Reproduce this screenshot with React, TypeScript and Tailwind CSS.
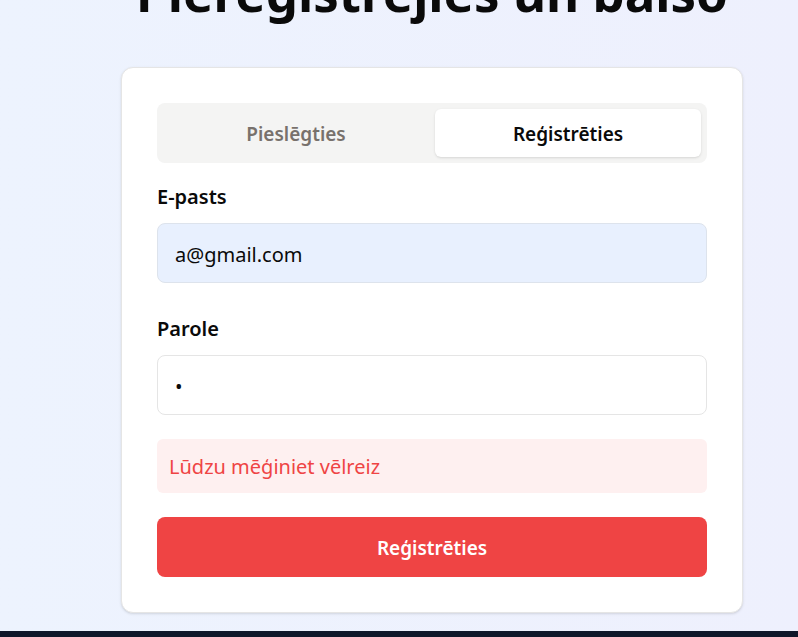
import React from "react";

export default function App() {
  return (
    <div
      className="flex h-[637px] w-full flex-col overflow-hidden bg-gradient-to-r from-[#edf3fe] to-[#eef0fd]"
      style={{ fontFamily: '"Noto Sans", "Open Sans", sans-serif' }}
    >
      <main className="flex flex-col pb-[18px]">
        <div className="ml-[121px] w-[622px]">
          <h1 className="mt-[-33px] mb-[49px] whitespace-nowrap text-center text-[51px] font-bold leading-[51px] text-[#0a0a0a]">
            Piereģistrējies un balso
          </h1>
          <div className="rounded-xl border border-[#e5e5e5] bg-white p-[35px] shadow-sm">
            <div className="flex h-[60px] gap-[6px] rounded-lg bg-[#f4f4f3] p-[6px]">
              <button className="flex-1 rounded-md pt-[2px] text-[19px] font-semibold text-[#78716c]">
                Pieslēgties
              </button>
              <button className="flex-1 rounded-md bg-white pt-[2px] text-[19px] font-semibold text-[#0a0a0a] shadow-sm">
                Reģistrēties
              </button>
            </div>

            <label className="mt-5 block text-[20px] font-semibold leading-[28px] text-[#0a0a0a]">
              E-pasts
            </label>
            <div className="mt-3 flex h-[60px] items-center rounded-lg border border-[#dde3ec] bg-[#e8f0fe] px-[17px] pt-[4px] text-[20px] text-[#0a0a0a]">
              a@gmail.com
            </div>

            <label className="mt-8 block text-[20px] font-semibold leading-[28px] text-[#0a0a0a]">
              Parole
            </label>
            <div className="mt-3 flex h-[60px] items-center rounded-lg border border-[#e5e5e5] bg-white px-[17px] pt-[4px] text-[20px] text-[#0a0a0a]">
              •
            </div>

            <div className="mt-6 flex h-[54px] items-center rounded-md bg-[#fef0f0] px-3 pt-[2px] text-[20px] text-[#ef4444]">
              Lūdzu mēģiniet vēlreiz
            </div>

            <button className="mt-6 flex h-[60px] w-full items-center justify-center rounded-lg bg-[#ef4444] pt-[3px] text-[19px] font-semibold text-white">
              Reģistrēties
            </button>
          </div>
        </div>
      </main>
      <footer className="flex-1 bg-[#0f172a]" />
    </div>
  );
}
